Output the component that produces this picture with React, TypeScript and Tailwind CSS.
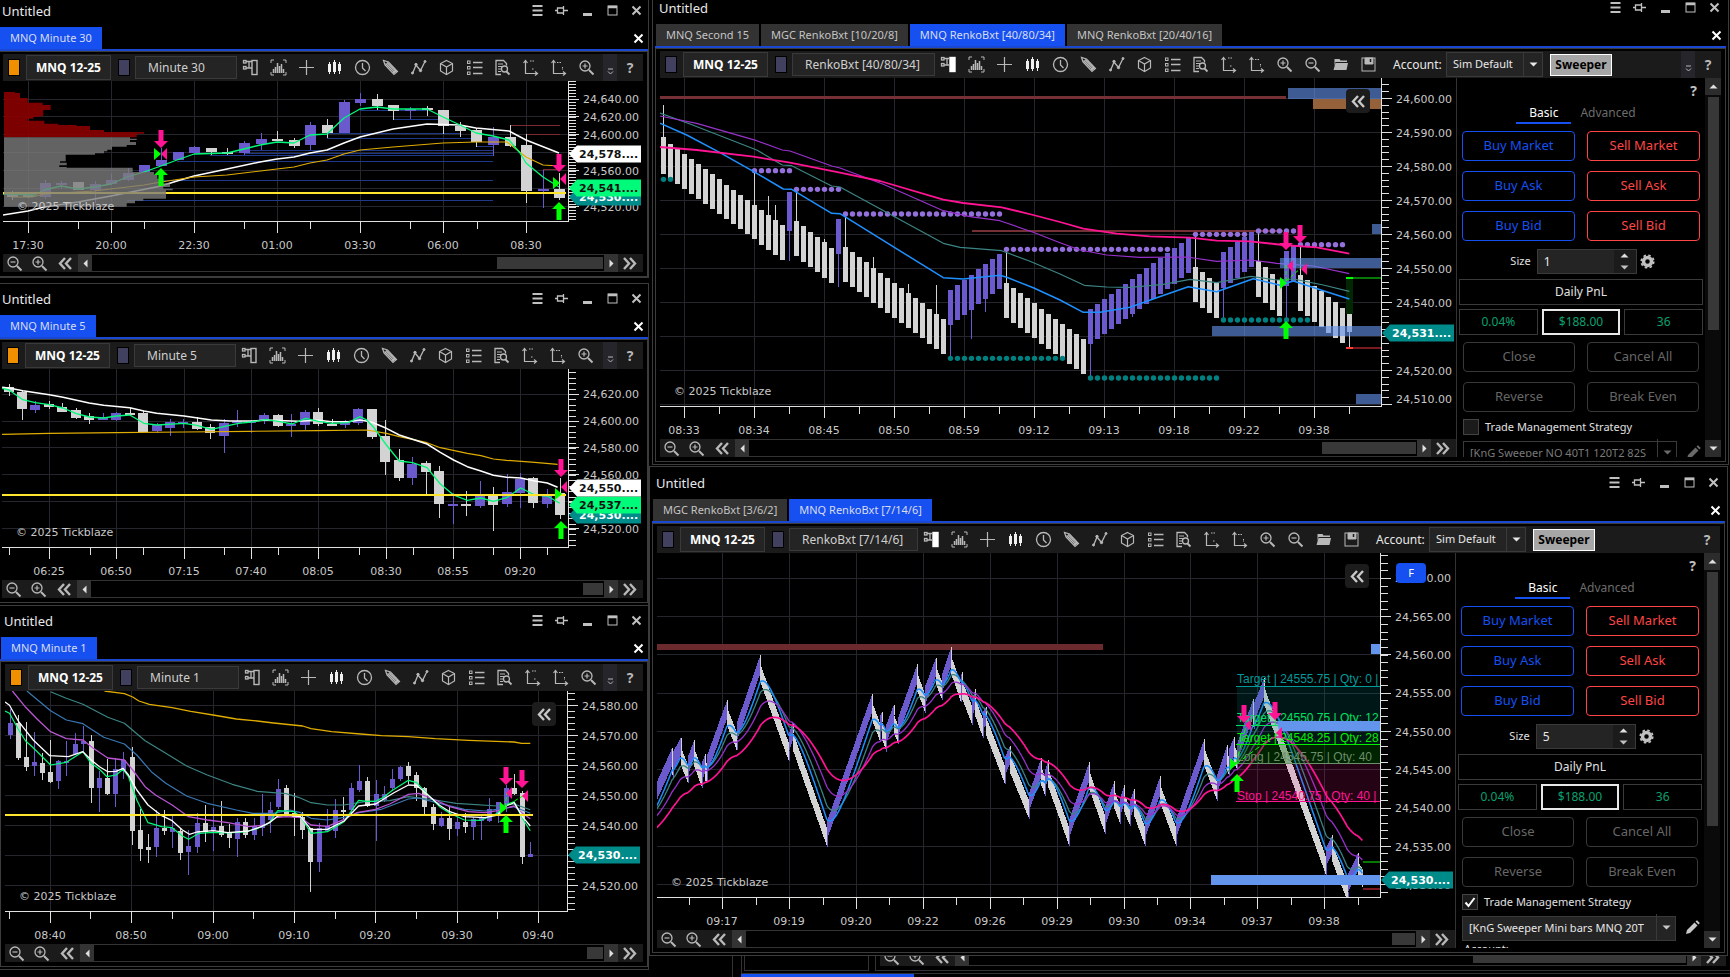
import type { ReactNode } from 'react';
import clsx from 'clsx';

type Point = [number, number];
type Dir = 'u' | 'd';
// direction, high, body top, body bottom, low
type Candle = [Dir, number, number, number, number];
type Space = { ox: number; oy: number; sx: number; sy: number };

const UP = '#6a5acd';
const DOWN = '#d3d3d3';
const MINT = '#00fa7a';
const GOLD = '#e0ac00';
const PINK = '#ff1493';
const LIME = '#00ff00';
const TEAL = '#008b8b';

const PX: Space = { ox: 0, oy: 0, sx: 1, sy: 1 };
const FIVE: Space = { ox: 0, oy: 280, sx: 0.4146, sy: 1 / 3 };
const ONE: Space = { ox: 0, oy: 600, sx: 0.4146, sy: 1 / 3 };
const R40: Space = { ox: 650, oy: 0, sx: 1 / 3, sy: 1 / 3 };
const R7: Space = { ox: 650, oy: 465, sx: 1 / 3, sy: 1 / 3 };

const toPath = (points: Point[], s: Space) =>
  points.map(([x, y]) => `${(s.ox + x * s.sx).toFixed(1)},${(s.oy + y * s.sy).toFixed(1)}`).join(' ');

const range = (from: number, to: number, step = 1) => {
  const out: number[] = [];
  for (let v = from; v <= to + 0.001; v += step) out.push(v);
  return out;
};

/* ---------- icons ---------- */

function Glyph({ name, active }: { name: string; active?: boolean }) {
  const shapes: Record<string, ReactNode> = {
    trader: (
      <>
        <rect x="10" y="1.5" width="5" height="14" fill={active ? '#fff' : 'none'} stroke={active ? '#fff' : 'currentColor'} strokeWidth="1.4" />
        <rect x="1.5" y="1.5" width="2.5" height="2.5" strokeWidth="1.3" />
        <rect x="1.5" y="7.5" width="2.5" height="2.5" strokeWidth="1.3" />
        <path d="M4 2.5h6M4 9h6M7 2.5v6.5" strokeWidth="1.3" />
      </>
    ),
    bars: (
      <>
        <path d="M1 4V1h3M13 1h3v3M16 13v3h-3M4 16H1v-3" />
        <path d="M3.5 14v-4M5.5 14V8M7.5 14V4M9.5 14V7M11.5 14V5M13.5 14v-4" strokeWidth="1.5" />
      </>
    ),
    plus: <path d="M8.5 1v15M1 8.5h15" strokeWidth="1.2" />,
    candles: (
      <g fill="#f0f0f0" stroke="#f0f0f0">
        <path d="M3.5 3v12M8.5 1v14M13.5 3v12" />
        <rect x="2.5" y="5.5" width="2" height="7" />
        <rect x="7.5" y="3.5" width="2" height="9" />
        <rect x="12.5" y="5.5" width="2" height="6" />
      </g>
    ),
    clock: (
      <>
        <circle cx="8.5" cy="8.5" r="7" strokeWidth="1.3" />
        <path d="M8.5 4v5l3 3" strokeWidth="1.3" />
      </>
    ),
    pencil: (
      <>
        <path d="M1.5 1.5l1.5 4.5 9 9.5 3.5-3L6.5 3z" strokeWidth="1.2" />
        <path d="M3.5 4.5l9.5 9.5M5 3.5l9.5 9.5M11 14l3-3" strokeWidth="1.5" />
      </>
    ),
    zigzag: (
      <>
        <path d="M2.5 14.5L6 6l4.5 5.5L15 2.5" strokeWidth="1.3" />
        <circle cx="6" cy="5.5" r="1.2" fill="currentColor" />
        <circle cx="10.5" cy="11.5" r="1.2" fill="currentColor" />
        <circle cx="2.5" cy="14" r="1" fill="currentColor" />
        <circle cx="15" cy="2.5" r="1" fill="currentColor" />
      </>
    ),
    cube: (
      <>
        <path d="M8.5 1.5l6 3V12l-6 3.500-6-3.500V4.500z" strokeWidth="1.2" />
        <path d="M2.5 4.5l6 3.500 6-3.500M8.5 8v7.500" strokeWidth="1.2" />
      </>
    ),
    list: (
      <>
        <rect x="1.5" y="2" width="2.5" height="2.5" />
        <rect x="1.5" y="7.5" width="2.5" height="2.5" />
        <rect x="1.5" y="13" width="2.5" height="2.5" />
        <path d="M7 3.5h9.5M7 8.5h9.5M7 14.5h9.5" strokeWidth="1.3" />
      </>
    ),
    report: (
      <>
        <path d="M7 15.5H2v-14h7.5l3 3v2" strokeWidth="1.3" />
        <path d="M4 5h5M4 7.5h4M4 10h3M4 12.5h3" />
        <circle cx="10.5" cy="10" r="3" strokeWidth="1.3" />
        <path d="M12.5 12.5l3 3" strokeWidth="1.8" />
      </>
    ),
    axisA: (
      <>
        <path d="M3.5 2v12.5H15M1.5 4l2-2.5 2 2.5M13 12.500l2.500 2-2.500 2" strokeWidth="1.2" />
        <path d="M8 2h4M10 10h2" strokeDasharray="1.5 1" />
      </>
    ),
    axisB: (
      <>
        <path d="M3.5 2v12.5H15M1.5 4l2-2.5 2 2.5M13 12.500l2.500 2-2.500 2" strokeWidth="1.2" />
        <path d="M7 3.5h4M12.5 8v3" strokeDasharray="1.5 1" />
      </>
    ),
    zoomIn: (
      <>
        <circle cx="7" cy="7" r="5" strokeWidth="1.3" />
        <path d="M4.5 7h5M7 4.5v5" strokeWidth="1.2" />
        <path d="M11 11l4.5 4.5" strokeWidth="2" />
      </>
    ),
    zoomOut: (
      <>
        <circle cx="7" cy="7" r="5" strokeWidth="1.3" />
        <path d="M4.5 7h5" strokeWidth="1.2" />
        <path d="M11 11l4.5 4.5" strokeWidth="2" />
      </>
    ),
    folder: (
      <g fill="#b8b8b8" stroke="none">
        <path d="M2.5 3h5l1 1.500h6.500V6H3.500l-1 4z" />
        <path d="M3.5 7H16l-1.500 7h-13z" />
      </g>
    ),
    save: (
      <>
        <rect x="2" y="2" width="13" height="13" />
        <path d="M5 2h8v6H5z" fill="#b8b8b8" />
        <path d="M10.5 3v3" stroke="#1b1b1b" strokeWidth="1.5" />
      </>
    ),
    menu: <path d="M3.5 4h10M3.5 8.5h10M3.5 13h10" strokeWidth="2" />,
    pin: <path d="M3.500 6h6v5h-6zM9.500 4v9M10 8.500h4M1 8.500h2" strokeWidth="1.3" />,
    minimize: <path d="M4 12.5h9" strokeWidth="3" />,
    maximize: (
      <>
        <rect x="4" y="4" width="9" height="9" />
        <path d="M4 5h9" strokeWidth="2.5" />
      </>
    ),
    close: <path d="M4.5 4.5l8 8M12.5 4.5l-8 8" strokeWidth="2" />,
    back: <path d="M8 3L3 8.5 8 14M14 3L9 8.500 14 14" strokeWidth="2.4" />,
    forward: <path d="M3 3l5 5.500L3 14M9 3l5 5.500L9 14" strokeWidth="2.4" />,
    left: <path d="M10.500 4.500v8l-4-4z" fill="#e0e0e0" stroke="none" />,
    right: <path d="M6.500 4.500v8l4-4z" fill="#e0e0e0" stroke="none" />,
    up: <path d="M4.500 10.500h8l-4-4z" fill="#e0e0e0" stroke="none" />,
    down: <path d="M4.500 6.500h8l-4 4z" fill="currentColor" stroke="none" />,
    more: <path d="M6 10h5M6 12.500l2.500 2.500 2.500-2.500" />,
    gear: (
      <>
        <circle cx="8.5" cy="8.5" r="4" strokeWidth="3.5" />
        <circle cx="8.5" cy="8.5" r="6.3" strokeWidth="1.6" strokeDasharray="2.6 2.35" />
      </>
    ),
    edit: <path d="M2 15l1-4 7.500-7.500 3 3L6 14zM11.500 2.500l1.500-1.200 2.800 2.800-1.300 1.400z" fill="currentColor" stroke="none" />,
  };
  return (
    <svg viewBox="0 0 17 17" className="h-[17px] w-[17px] shrink-0" fill="none" stroke="currentColor" aria-hidden="true">
      {shapes[name]}
    </svg>
  );
}

/* ---------- chart parts ---------- */

function Line({ points, color, s = PX, width = 1 }: { points: Point[]; color: string; s?: Space; width?: number }) {
  return <polyline points={toPath(points, s)} fill="none" stroke={color} strokeWidth={width} strokeLinejoin="round" />;
}

function Candles({ data, x0, step, width, s = PX }: { data: Candle[]; x0: number; step: number; width: number; s?: Space }) {
  return (
    <g shapeRendering="crispEdges">
      {data.map(([dir, high, top, bottom, low], i) => {
        const x = Math.round(x0 + i * step);
        const y = (v: number) => s.oy + v * s.sy;
        const color = dir === 'u' ? UP : DOWN;
        return (
          <g key={i} fill={color}>
            <rect x={x} y={y(high)} width="1" height={y(low) - y(high)} />
            <rect x={x - Math.floor(width / 2)} y={y(top)} width={width} height={Math.max(2, y(bottom) - y(top))} />
          </g>
        );
      })}
    </g>
  );
}

function ArrowDown({ x, y }: { x: number; y: number }) {
  return <path d={`M${x} ${y}l-7-7h4.500v-11h5v11H${x + 7}z`} fill={PINK} />;
}

function ArrowUp({ x, y }: { x: number; y: number }) {
  return <path d={`M${x} ${y}l-7 7h4.500v11h5v-11H${x + 7}z`} fill={LIME} />;
}

function Exit({ x, y }: { x: number; y: number }) {
  return <path d={`M${x} ${y}l6-6v12z`} fill={PINK} />;
}

function Entry({ x, y }: { x: number; y: number }) {
  return <path d={`M${x} ${y}l-7-6v12z`} fill={LIME} />;
}

function Tag({ x, y, label, fill, color }: { x: number; y: number; label: string; fill: string; color: string }) {
  return (
    <g>
      <path d={`M${x} ${y}l8-8.500h64v17h-64z`} fill={fill} />
      <text x={x + 10} y={y + 4} fill={color} className="font-['DejaVu_Sans'] text-[11px] font-bold">
        {label}
      </text>
    </g>
  );
}

type ChartProps = {
  id: string;
  box: [number, number, number, number];
  axis: Point;
  times: [number, string][];
  minorTimes: number[];
  grid: number[];
  prices: [number, string][];
  tick: number;
  mark: Point;
  tags: ReactNode;
  children: ReactNode;
  className: string;
};

function Chart({ id, box, axis, times, minorTimes, grid, prices, tick, mark, tags, children, className }: ChartProps) {
  const [bx, by, bw, bh] = box;
  const [ax, ay] = axis;
  const first = grid[0];
  const up = range(1, Math.floor((first - by) / tick)).map((n) => first - n * tick);
  const down = range(0, Math.floor((ay - first) / tick)).map((n) => first + n * tick);
  return (
    <svg viewBox={`${bx} ${by} ${bw} ${bh}`} preserveAspectRatio="xMaxYMin slice" className={clsx('block w-full', className)} role="img" aria-label={id}>
      <clipPath id={id}>
        <rect x={bx} y={by} width={ax - bx} height={ay - by} />
      </clipPath>
      <g clipPath={`url(#${id})`}>
        <g shapeRendering="crispEdges" fill="#25252e">
          {grid.map((y) => (
            <rect key={y} x={bx} y={Math.round(y)} width={ax - bx} height="1" />
          ))}
          {times.map(([x]) => (
            <rect key={x} x={Math.round(x)} y={by} width="1" height={ay - by} />
          ))}
        </g>
        {children}
        <text x={mark[0]} y={mark[1]} fill="#c8c8c8" className="font-['DejaVu_Sans'] text-[11px]">
          © 2025 Tickblaze
        </text>
      </g>
      <g shapeRendering="crispEdges" fill="#e0e0e0">
        <rect x={bx} y={ay} width={ax - bx + 1} height="1" />
        <rect x={ax} y={by} width="1" height={ay - by} />
        {times.map(([x]) => (
          <rect key={x} x={Math.round(x)} y={ay} width="1" height="12" />
        ))}
        {minorTimes.map((x) => (
          <rect key={x} x={Math.round(x)} y={ay} width="1" height="8" />
        ))}
        {[...up, ...down].map((y) => (
          <rect key={y} x={ax} y={Math.round(y)} width="8" height="1" />
        ))}
        {grid.map((y) => (
          <rect key={y} x={ax} y={Math.round(y)} width="11" height="1" />
        ))}
      </g>
      <g fill="#c8c8c8" className="font-['DejaVu_Sans'] text-[11px]">
        {prices.map(([y, label]) => (
          <text key={label} x={ax + 15} y={y + 4}>
            {label}
          </text>
        ))}
        {times.map(([x, label]) => (
          <text key={label} x={x} y={ay + 28} textAnchor="middle">
            {label}
          </text>
        ))}
      </g>
      {tags}
    </svg>
  );
}

/* ---------- Minute 30 ---------- */

const m30: Candle[] = [
  ['d', 191, 194, 197, 200], ['d', 193, 195, 197, 198], ['u', 180, 183, 197, 199], ['u', 181, 183, 185, 189],
  ['d', 182, 182, 190, 190], ['u', 181, 184, 190, 203], ['u', 174, 180, 184, 185], ['u', 168, 173, 180, 181],
  ['u', 165, 165, 172, 172], ['u', 148, 160, 166, 166], ['u', 152, 152, 160, 160], ['u', 146, 147, 153, 153],
  ['d', 148, 148, 152, 155], ['d', 148, 152, 153, 155], ['u', 141, 143, 153, 155], ['u', 133, 139, 144, 150],
  ['d', 131, 139, 141, 141], ['d', 138, 140, 146, 148], ['u', 122, 125, 145, 150], ['d', 119, 125, 133, 138],
  ['u', 100, 102, 133, 133], ['u', 93, 99, 103, 106], ['d', 94, 99, 106, 110], ['d', 105, 105, 111, 120],
  ['u', 107, 109, 111, 119], ['d', 106, 108, 110, 116], ['d', 110, 110, 126, 134], ['d', 122, 126, 131, 137],
  ['d', 128, 130, 142, 147], ['u', 127, 137, 145, 156], ['d', 125, 137, 146, 147], ['d', 134, 145, 191, 203],
  ['u', 170, 189, 191, 208], ['d', 173, 189, 198, 200],
];

const m30Profile: Space = { ox: 0, oy: 50, sx: 1 / 3, sy: 1 / 3 };
const m30Red: Point[] = [
  [12, 126], [45, 126], [45, 129], [60, 129], [60, 144], [83, 144], [83, 158], [128, 158], [128, 165], [152, 165], [152, 180],
  [130, 180], [130, 198], [100, 202], [100, 206], [83, 206], [83, 212], [133, 212], [133, 221], [175, 221], [175, 225], [230, 225],
  [230, 228], [270, 228], [270, 240], [312, 240], [312, 246], [432, 246], [432, 251], [410, 251], [410, 262], [12, 262],
];
const m30Gray: Point[] = [
  [12, 262], [390, 262], [390, 266], [410, 266], [410, 270], [390, 270], [390, 276], [408, 276], [408, 285], [380, 285], [380, 290],
  [336, 290], [336, 299], [322, 299], [322, 304], [312, 304], [312, 310], [285, 310], [285, 314], [197, 314], [197, 334], [180, 334],
  [180, 338], [200, 338], [200, 346], [178, 346], [178, 351], [200, 351], [200, 353], [398, 353], [398, 366], [462, 366], [462, 375],
  [472, 375], [472, 386], [490, 386], [490, 400], [510, 400], [510, 411], [490, 411], [490, 416], [518, 416], [518, 421], [498, 421],
  [498, 446], [430, 446], [430, 452], [405, 452], [405, 460], [380, 460], [380, 470], [12, 470],
];
// y, from, to
const m30Levels: [number, number, number][] = [
  [110, 360, 427], [119, 393, 443], [133, 327, 460], [138, 327, 480], [146, 476, 493], [150, 244, 493], [153, 244, 493],
  [155, 210, 493], [161, 177, 493], [180, 161, 493], [200, 127, 493],
];

function Minute30Chart() {
  return (
    <Chart
      id="minute-30"
      className="h-[173px]"
      box={[3, 81, 640, 173]}
      axis={[568, 221]}
      times={[[28, '17:30'], [111, '20:00'], [194, '22:30'], [277, '01:00'], [360, '03:30'], [443, '06:00'], [526, '08:30']]}
      minorTimes={[78, 144, 244, 310, 410, 477]}
      grid={[99, 116, 134, 152, 170, 188, 206]}
      prices={[[99, '24,640.00'], [117, '24,620.00'], [135, '24,600.00'], [171, '24,560.00'], [207, '24,520.00']]}
      tick={3}
      mark={[17, 210]}
      tags={
        <>
          <Tag x={569} y={197} label="24,530...." fill={TEAL} color="#fff" />
          <Tag x={569} y={188} label="24,541...." fill={MINT} color="#111" />
          <Tag x={569} y={154} label="24,578...." fill="#fff" color="#111" />
          <ArrowDown x={559} y={172} />
          <ArrowUp x={559} y={202} />
        </>
      }
    >
      <g shapeRendering="crispEdges">
        {m30Levels.map(([y, a, b]) => (
          <rect key={y} x={a} y={y} width={b - a} height="1" fill="#1f3888" />
        ))}
        <rect x="510" y="125" width="50" height="1" fill="#7a2a30" />
        <rect x="526" y="134" width="34" height="1" fill="#7a2a30" />
        <rect x="543" y="169" width="17" height="1" fill="#7a2a30" />
      </g>
      <Candles data={m30} x0={11.5} step={16.6} width={11} />
      <Line color="#ffffff" width={1.5} points={[[3, 215], [28, 211], [44, 207], [78, 202], [111, 196], [161, 186], [177, 181], [194, 176], [227, 169], [260, 162], [277, 159], [294, 157], [310, 153], [327, 150], [344, 143], [360, 137], [393, 129], [427, 124], [460, 125], [476, 128], [509, 131], [526, 140], [559, 153]]} />
      <Line color={GOLD} width={1.2} points={[[11, 197], [32, 197], [44, 194], [94, 191], [144, 185], [161, 182], [194, 177], [227, 175], [277, 169], [294, 167], [310, 163], [327, 160], [344, 154], [360, 150], [393, 147], [443, 143], [476, 142], [507, 142], [526, 157], [543, 165], [559, 166]]} />
      <Line color={MINT} width={1.3} points={[[3, 194], [35, 195], [44, 190], [61, 186], [78, 189], [94, 187], [111, 184], [127, 177], [144, 172], [161, 166], [177, 160], [194, 154], [227, 153], [244, 149], [260, 145], [277, 142], [294, 143], [310, 135], [327, 134], [344, 118], [360, 109], [377, 107], [393, 109], [427, 109], [443, 117], [460, 125], [476, 133], [493, 136], [509, 140], [520, 153], [526, 163], [543, 177], [559, 187]]} />
      <rect x="3" y="192" width="563" height="2" fill="#ffe52e" />
      <polygon points={toPath(m30Red, m30Profile)} fill="#8b0000" fillOpacity="0.9" />
      <polygon points={toPath(m30Gray, m30Profile)} fill="#7c7c7c" fillOpacity="0.8" />
      <ArrowDown x={161} y={148} />
      <Entry x={161} y={154} />
      <Exit x={161} y={154} />
      <ArrowUp x={161} y={168} />
      <Entry x={560} y={183} />
      <Exit x={560} y={179} />
    </Chart>
  );
}

/* ---------- Minute 5 ---------- */

const m5: Candle[] = [
  ['d', 312, 320, 335, 348], ['d', 330, 336, 387, 420], ['u', 362, 375, 390, 399], ['d', 363, 371, 381, 388],
  ['d', 368, 381, 395, 396], ['d', 385, 389, 414, 416], ['d', 400, 408, 420, 432], ['u', 400, 411, 419, 420],
  ['u', 396, 399, 420, 424], ['d', 385, 398, 402, 404], ['d', 393, 399, 456, 456], ['u', 430, 436, 454, 458],
  ['u', 417, 426, 444, 468], ['u', 418, 425, 432, 445], ['d', 412, 426, 447, 450], ['d', 432, 441, 459, 477],
  ['u', 418, 429, 468, 519], ['u', 390, 422, 430, 440], ['u', 420, 424, 427, 460], ['u', 400, 405, 420, 432],
  ['d', 403, 405, 438, 440], ['u', 403, 431, 438, 471], ['u', 390, 396, 435, 450], ['d', 384, 396, 432, 438],
  ['d', 418, 431, 438, 438], ['u', 420, 426, 435, 444], ['u', 384, 387, 430, 435], ['d', 387, 387, 471, 477],
  ['d', 420, 468, 546, 585], ['d', 507, 540, 594, 603], ['u', 530, 551, 594, 615], ['d', 543, 549, 576, 642],
  ['d', 558, 573, 672, 714], ['u', 640, 671, 675, 732], ['d', 633, 672, 678, 709], ['u', 603, 649, 678, 685],
  ['d', 621, 648, 675, 753], ['u', 582, 636, 672, 681], ['u', 578, 597, 640, 684], ['d', 591, 594, 669, 684],
  ['u', 627, 645, 672, 684], ['d', 594, 640, 705, 717],
];

function Minute5Chart() {
  return (
    <Chart
      id="minute-5"
      className="h-[211px]"
      box={[2, 369, 641, 211]}
      axis={[568, 547]}
      times={[[49, '06:25'], [116, '06:50'], [184, '07:15'], [251, '07:40'], [318, '08:05'], [386, '08:30'], [453, '08:55'], [520, '09:20']]}
      minorTimes={[9, 90, 143, 224, 278, 359, 413, 493, 547]}
      grid={[394, 421, 447, 474, 501, 528]}
      prices={[[394, '24,620.00'], [421, '24,600.00'], [448, '24,580.00'], [475, '24,560.00'], [529, '24,520.00']]}
      tick={5.4}
      mark={[16, 536]}
      tags={
        <>
          <Tag x={569} y={515} label="24,530...." fill={TEAL} color="#fff" />
          <Tag x={569} y={505} label="24,537...." fill={MINT} color="#111" />
          <Tag x={569} y={488} label="24,550...." fill="#fff" color="#111" />
        </>
      }
    >
      <Candles data={m5} x0={8.5} step={13.46} width={10} s={FIVE} />
      <Line s={FIVE} color={GOLD} width={1.2} points={[[5, 463], [119, 460], [281, 458], [444, 456], [600, 454], [768, 452], [885, 450], [932, 460], [963, 470], [995, 478], [1030, 488], [1062, 503], [1127, 520], [1160, 527], [1190, 537], [1222, 541], [1290, 547], [1345, 553]]} />
      <Line s={FIVE} color="#ffffff" width={1.5} points={[[5, 322], [22, 324], [55, 332], [119, 344], [152, 352], [215, 369], [250, 376], [313, 383], [347, 393], [378, 400], [444, 408], [510, 420], [555, 423], [610, 423], [640, 420], [720, 424], [768, 421], [800, 425], [840, 425], [868, 420], [880, 422], [897, 427], [932, 445], [963, 465], [995, 478], [1030, 492], [1062, 517], [1094, 540], [1127, 560], [1160, 573], [1190, 586], [1222, 592], [1256, 594], [1290, 603], [1320, 609], [1345, 622]]} />
      <Line s={FIVE} color={MINT} width={1.3} points={[[5, 325], [22, 330], [55, 359], [85, 368], [119, 374], [152, 384], [184, 401], [216, 411], [250, 414], [281, 408], [313, 405], [347, 430], [378, 435], [444, 430], [475, 436], [510, 448], [542, 439], [575, 430], [606, 426], [640, 419], [672, 424], [705, 432], [737, 415], [768, 424], [800, 430], [840, 428], [868, 410], [885, 420], [900, 440], [932, 495], [963, 543], [995, 548], [1030, 563], [1062, 612], [1094, 645], [1127, 661], [1160, 654], [1190, 664], [1222, 653], [1256, 624], [1290, 645], [1320, 648], [1350, 670]]} />
      <rect x="2" y="494" width="564" height="2" fill="#ffe52e" />
      <ArrowDown x={561} y={477} />
      <Exit x={561} y={487} />
      <Entry x={562} y={494} />
      <ArrowUp x={561} y={521} />
    </Chart>
  );
}

/* ---------- Minute 1 ---------- */

const m1: Candle[] = [
  ['u', 327, 369, 405, 417], ['d', 345, 369, 473, 480], ['d', 366, 471, 501, 512], ['u', 396, 486, 498, 527],
  ['d', 460, 489, 518, 540], ['d', 420, 516, 546, 549], ['u', 480, 483, 543, 567], ['u', 423, 484, 488, 527],
  ['u', 399, 432, 462, 465], ['u', 378, 424, 432, 456], ['d', 405, 423, 564, 609], ['u', 512, 534, 564, 636],
  ['d', 477, 534, 582, 584], ['u', 474, 507, 582, 621], ['u', 456, 480, 510, 538], ['d', 442, 471, 693, 735],
  ['d', 627, 690, 747, 783], ['d', 702, 741, 750, 789], ['u', 630, 684, 741, 771], ['d', 631, 684, 692, 705],
  ['u', 648, 683, 696, 744], ['d', 684, 693, 759, 780], ['u', 690, 738, 756, 825], ['u', 640, 669, 741, 759],
  ['d', 615, 669, 696, 726], ['u', 624, 681, 693, 753], ['d', 603, 678, 705, 711], ['d', 672, 696, 714, 744],
  ['u', 654, 666, 717, 771], ['d', 654, 666, 705, 714], ['u', 655, 678, 705, 720], ['u', 583, 640, 683, 708],
  ['u', 606, 630, 660, 699], ['u', 537, 567, 621, 627], ['d', 555, 564, 642, 645], ['d', 578, 640, 650, 708],
  ['d', 636, 650, 690, 717], ['d', 684, 684, 786, 876], ['u', 670, 684, 786, 816], ['u', 627, 679, 693, 696],
  ['u', 597, 630, 693, 714], ['d', 590, 629, 633, 660], ['u', 549, 564, 630, 642], ['u', 495, 542, 570, 576],
  ['d', 531, 543, 618, 621], ['u', 540, 582, 618, 723], ['u', 558, 582, 600, 606], ['u', 507, 537, 564, 573],
  ['u', 498, 500, 537, 543], ['d', 486, 498, 528, 552], ['d', 516, 525, 564, 603], ['d', 561, 564, 621, 645],
  ['d', 612, 621, 672, 690], ['u', 636, 654, 678, 681], ['d', 621, 654, 687, 720], ['u', 650, 665, 687, 708],
  ['d', 640, 666, 681, 699], ['u', 650, 657, 681, 720], ['u', 648, 655, 664, 720], ['u', 594, 627, 663, 666],
  ['u', 606, 606, 645, 669], ['u', 555, 564, 615, 636], ['d', 521, 564, 582, 586], ['d', 573, 579, 771, 792],
  ['u', 726, 762, 771, 771],
];

function Minute1Chart() {
  return (
    <Chart
      id="minute-1"
      className="h-[253px]"
      box={[5, 691, 638, 253]}
      axis={[567, 911]}
      times={[[50, '08:40'], [131, '08:50'], [213, '09:00'], [294, '09:10'], [375, '09:20'], [457, '09:30'], [538, '09:40']]}
      minorTimes={[9, 90, 172, 253, 335, 416, 497]}
      grid={[705, 735, 765, 795, 825, 855, 885]}
      prices={[[706, '24,580.00'], [736, '24,570.00'], [766, '24,560.00'], [796, '24,550.00'], [826, '24,540.00'], [886, '24,520.00']]}
      tick={6}
      mark={[19, 900]}
      tags={<Tag x={568} y={855} label="24,530...." fill={TEAL} color="#fff" />}
    >
      <Candles data={m1} x0={9.5} step={8.135} width={5} s={ONE} />
      <Line s={ONE} color={GOLD} width={1.3} points={[[252, 273], [300, 281], [320, 291], [335, 303], [360, 313], [415, 323], [460, 334], [514, 345], [570, 357], [620, 363], [660, 369], [730, 378], [750, 386], [800, 395], [870, 402], [920, 407], [985, 410], [1050, 416], [1130, 421], [1240, 426], [1258, 430], [1279, 430]]} />
      <Line s={ONE} color="#3d8585" width={1.2} points={[[122, 275], [160, 295], [200, 313], [260, 352], [300, 370], [350, 422], [400, 460], [450, 498], [500, 525], [560, 553], [620, 574], [690, 581], [720, 592], [750, 608], [790, 615], [830, 615], [880, 605], [940, 602], [985, 590], [1050, 600], [1100, 610], [1200, 618], [1240, 612], [1279, 629]]} />
      <Line s={ONE} color="#3a78b5" width={1.2} points={[[65, 273], [122, 332], [160, 360], [200, 371], [250, 412], [300, 432], [330, 465], [365, 515], [400, 550], [450, 588], [500, 610], [570, 630], [610, 640], [660, 640], [700, 630], [725, 638], [750, 655], [790, 660], [830, 652], [870, 637], [920, 628], [985, 597], [1010, 594], [1060, 610], [1120, 628], [1170, 633], [1240, 620], [1279, 640]]} />
      <Line s={ONE} color="#ba55d3" width={1.3} points={[[30, 273], [62, 322], [90, 358], [122, 395], [160, 416], [200, 420], [225, 445], [260, 474], [300, 480], [320, 510], [350, 560], [375, 585], [415, 615], [455, 650], [500, 660], [550, 668], [600, 680], [640, 675], [665, 653], [690, 650], [725, 653], [750, 675], [790, 679], [830, 658], [860, 638], [906, 628], [940, 612], [985, 583], [1010, 580], [1050, 600], [1085, 620], [1130, 635], [1170, 638], [1200, 632], [1240, 618], [1260, 640], [1279, 656]]} />
      <Line s={ONE} color={MINT} width={1.2} points={[[12, 333], [23, 340], [45, 390], [62, 423], [80, 443], [122, 495], [160, 487], [200, 455], [220, 490], [240, 508], [258, 530], [280, 525], [297, 508], [310, 530], [330, 600], [357, 668], [390, 680], [415, 683], [440, 708], [455, 718], [480, 700], [514, 697], [550, 699], [590, 696], [620, 686], [650, 668], [670, 632], [690, 633], [710, 635], [728, 655], [750, 700], [790, 695], [830, 665], [865, 601], [885, 604], [906, 604], [925, 592], [945, 572], [985, 541], [1005, 548], [1025, 575], [1060, 620], [1085, 640], [1120, 660], [1160, 661], [1200, 640], [1225, 612], [1240, 605], [1260, 655], [1279, 692]]} />
      <Line s={ONE} color="#ffffff" width={1.3} points={[[12, 306], [23, 316], [45, 365], [80, 420], [120, 467], [165, 470], [200, 455], [220, 480], [240, 500], [260, 515], [280, 514], [297, 505], [310, 525], [330, 570], [357, 615], [390, 647], [415, 662], [440, 690], [457, 703], [475, 696], [514, 692], [550, 698], [600, 693], [630, 680], [650, 668], [670, 648], [690, 645], [725, 650], [750, 688], [790, 688], [830, 663], [865, 618], [906, 612], [950, 578], [985, 555], [1005, 556], [1030, 583], [1060, 616], [1085, 635], [1120, 650], [1170, 653], [1200, 645], [1220, 618], [1240, 608], [1260, 650], [1279, 678]]} />
      <rect x="5" y="814" width="528" height="2" fill="#ffe52e" />
      <path d="M504 807L523 796M505 807L507 792" stroke={LIME} strokeDasharray="4 2" />
      <ArrowDown x={506} y={785} />
      <ArrowDown x={522} y={788} />
      <Exit x={506} y={793} />
      <Exit x={522} y={796} />
      <Entry x={507} y={808} />
      <ArrowUp x={506} y={815} />
    </Chart>
  );
}

/* ---------- RenkoBxt 40/80/34 ---------- */

// first bar, count, direction, first top, step, height
const bricks: [number, number, Dir, number, number, number][] = [
  [0, 1, 'd', 411, 0, 111], [1, 17, 'd', 432, 15.2, 104], [18, 1, 'u', 576, 0, 117], [19, 6, 'd', 663, 16, 106],
  [25, 1, 'u', 657, 0, 105], [26, 15, 'd', 741, 15.4, 105], [41, 8, 'u', 870, -15.4, 105], [49, 12, 'd', 849, 15.3, 105],
  [61, 15, 'u', 927, -15.2, 106], [76, 4, 'd', 801, 16, 106], [80, 5, 'u', 756, -15.2, 107], [85, 4, 'd', 783, 19, 108],
  [89, 2, 'u', 752, -14, 106], [91, 7, 'd', 825, 16.4, 107], [98, 1, 'd', 942, 0, 54],
];
// bar, direction, from, to
const brickWicks: [number, Dir, number, number][] = [
  [0, 'd', 315, 420], [13, 'd', 510, 640], [15, 'd', 588, 650], [16, 'd', 615, 670], [18, 'u', 690, 783], [19, 'd', 570, 680],
  [23, 'd', 717, 740], [25, 'u', 760, 861], [26, 'd', 645, 750], [30, 'd', 771, 810], [35, 'd', 852, 890], [39, 'd', 855, 950],
  [41, 'u', 970, 1070], [44, 'u', 900, 1017], [46, 'u', 880, 936], [49, 'd', 750, 850], [61, 'u', 1030, 1130], [67, 'u', 930, 950],
  [76, 'd', 708, 810], [80, 'u', 860, 955], [85, 'd', 693, 790], [89, 'u', 850, 960], [91, 'd', 740, 830], [98, 'd', 990, 1040],
];
// from bar, to bar, y
const swingHighs: [number, number, number][] = [[13, 18, 512], [19, 25, 568], [26, 48, 642], [49, 72, 748], [76, 83, 703], [85, 90, 693], [91, 97, 734]];
const swingLows: [number, number, number][] = [[0, 1, 538], [41, 57, 1075], [61, 79, 1134], [80, 92, 960]];

function Dots({ rows, color }: { rows: [number, number, number][]; color: string }) {
  return (
    <g fill={color}>
      {rows.flatMap(([a, b, y]) => range(a, b).map((i) => <circle key={`${i}-${y}`} cx={663.5 + i * 7} cy={y / 3} r="2.7" />))}
    </g>
  );
}

function Renko40Chart() {
  return (
    <Chart
      id="renko-40"
      className="h-[361px]"
      box={[660, 78, 796, 361]}
      axis={[1381, 406]}
      times={[[684, '08:33'], [754, '08:34'], [824, '08:45'], [894, '08:50'], [964, '08:59'], [1034, '09:12'], [1104, '09:13'], [1174, '09:18'], [1244, '09:22'], [1314, '09:38']]}
      minorTimes={range(719, 1349, 70)}
      grid={[98, 132, 166, 200, 234, 268, 302, 336, 370, 404]}
      prices={[[99, '24,600.00'], [133, '24,590.00'], [167, '24,580.00'], [201, '24,570.00'], [235, '24,560.00'], [269, '24,550.00'], [303, '24,540.00'], [371, '24,520.00'], [399, '24,510.00']]}
      tick={6.8}
      mark={[674, 395]}
      tags={<Tag x={1382} y={333} label="24,531...." fill={TEAL} color="#fff" />}
    >
      <rect x="660" y="96" width="626" height="3" fill="#753035" />
      <rect x="972" y="230" width="311" height="2" fill="#753035" />
      <g shapeRendering="crispEdges">
        <rect x="1346" y="278" width="7" height="36" fill="#032603" />
        {brickWicks.map(([i, dir, a, b]) => (
          <rect key={i} x={663 + i * 7} y={a / 3} width="1" height={(b - a) / 3} fill={dir === 'u' ? UP : DOWN} />
        ))}
        {bricks.flatMap(([start, count, dir, top, step, height]) =>
          range(0, count - 1).map((n) => (
            <rect key={start + n} x={661 + (start + n) * 7} y={(top + n * step) / 3} width="5" height={height / 3} fill={dir === 'u' ? UP : DOWN} />
          )),
        )}
      </g>
      <Dots rows={swingHighs} color="#9370db" />
      <Dots rows={swingLows} color="#008080" />
      <Line s={R40} color="#3d8585" width={1.2} points={[[30, 339], [120, 372], [320, 450], [397, 495], [425, 497], [545, 558], [570, 561], [880, 730], [930, 742], [1055, 752], [1140, 784], [1230, 822], [1303, 856], [1370, 861], [1440, 862], [1540, 853], [1620, 838], [1700, 848], [1803, 829], [1880, 840], [1930, 837], [2020, 855], [2098, 874]]} />
      <Line s={R40} color="#9932cc" width={1.2} points={[[30, 348], [140, 370], [320, 422], [397, 450], [420, 453], [545, 498], [570, 504], [700, 553], [880, 632], [960, 650], [1050, 662], [1150, 697], [1230, 728], [1290, 750], [1370, 765], [1470, 772], [1610, 771], [1700, 784], [1800, 780], [1880, 790], [1990, 798], [2098, 821]]} />
      <Line s={R40} color="#1e90ff" width={1.5} points={[[30, 370], [110, 405], [210, 458], [310, 514], [400, 567], [425, 568], [545, 640], [570, 641], [880, 833], [940, 837], [1050, 826], [1070, 832], [1150, 863], [1230, 900], [1300, 937], [1350, 937], [1440, 922], [1520, 893], [1615, 860], [1700, 875], [1810, 836], [1890, 856], [1930, 843], [2020, 872], [2098, 897]]} />
      <Line s={R40} color={PINK} width={1.8} points={[[30, 441], [140, 450], [310, 470], [420, 488], [570, 518], [690, 543], [880, 599], [940, 609], [1055, 622], [1150, 645], [1230, 666], [1300, 686], [1400, 701], [1500, 709], [1620, 713], [1700, 722], [1800, 724], [1900, 735], [2000, 742], [2098, 761]]} />
      <g fill="#6495ed" fillOpacity="0.62">
        <rect x="1288" y="88" width="94" height="11" />
        <rect x="1372" y="224" width="10" height="10" />
        <rect x="1280" y="258" width="102" height="10" />
        <rect x="1212" y="326" width="170" height="10" />
        <rect x="1356" y="394" width="26" height="10" />
      </g>
      <rect x="1313" y="99" width="69" height="10" fill="#94613a" />
      <g shapeRendering="crispEdges">
        <rect x="1353" y="277" width="29" height="2" fill="#067806" />
        <rect x="1346" y="277" width="7" height="2" fill={LIME} />
        <rect x="1353" y="347" width="29" height="2" fill="#7a1a20" />
        <rect x="1346" y="347" width="7" height="2" fill="#ff3b3b" />
      </g>
      <path d="M1286 281l15-13M1286 281v-18" stroke={LIME} strokeDasharray="4 2" />
      <ArrowDown x={1286} y={250} />
      <ArrowDown x={1300} y={243} />
      <Exit x={1287} y={266} />
      <Exit x={1301} y={269} />
      <Entry x={1287} y={283} />
      <ArrowUp x={1286} y={321} />
    </Chart>
  );
}

/* ---------- RenkoBxt 7/14/6 ---------- */

// swing points, alternating low / high
const swings: Point[] = [
  [12, 1050], [67, 848], [70, 940], [92, 818], [114, 955], [133, 824], [157, 970], [166, 868], [172, 950], [232, 704], [260, 855],
  [331, 571], [416, 887], [428, 773], [532, 1147], [667, 686], [691, 830], [696, 742], [709, 860], [731, 720], [745, 837], [802, 598],
  [826, 743], [858, 578], [877, 705], [904, 547], [933, 712], [937, 622], [967, 780], [976, 673], [1000, 820], [1007, 727],
  [1065, 957], [1080, 842], [1138, 1063], [1174, 880], [1186, 993], [1195, 886], [1258, 1143], [1318, 892], [1366, 1108],
  [1393, 949], [1411, 1078], [1423, 961], [1441, 1084], [1453, 973], [1486, 1144], [1531, 934], [1579, 1144], [1663, 823],
  [1702, 1008], [1732, 840], [1738, 930], [1753, 816], [1762, 915], [1810, 703], [1813, 792], [1843, 640], [2028, 1230],
  [2047, 1110], [2093, 1310], [2125, 1163], [2138, 1268],
];
const BRICK = 54;

const closes: Point[] = [];
swings.slice(1).forEach(([x, y], i) => {
  const [px, py] = swings[i];
  const rising = y < py;
  const from = rising ? py - BRICK : py + BRICK;
  for (let v = px; v < x; v += 2) {
    closes.push([v, from + ((y - from) * (v - px)) / (x - px)]);
  }
});

function ema(length: number, start: number): Point[] {
  let value = start;
  return closes.map(([x, y]): Point => {
    value += ((y - value) * 2) / length;
    return [x, value];
  });
}

// text baseline, line y, label, color
const levels: [number, number, string, string][] = [
  [683, 686, 'Target | 24555.75 | Qty: 0 |', '#009a9a'],
  [722, 725, 'Target | 24550.75 | Qty: 12', '#00e060'],
  [742, 744, 'Target | 24548.25 | Qty: 28', '#00f000'],
  [761, 763, 'Long | 24545.75 | Qty: 40', '#6b8e6b'],
  [800, 801, 'Stop | 24540.75 | Qty: 40 |', '#ff1493'],
];

function Renko7Chart() {
  return (
    <Chart
      id="renko-7"
      className="h-[377px]"
      box={[657, 553, 798, 377]}
      axis={[1380, 897]}
      times={[[722, '09:17'], [789, '09:19'], [856, '09:20'], [923, '09:22'], [990, '09:26'], [1057, '09:29'], [1124, '09:30'], [1190, '09:34'], [1257, '09:37'], [1324, '09:38']]}
      minorTimes={[689, 756, 823, 889, 956, 1023, 1090, 1157, 1224, 1291, 1358]}
      grid={[578, 616, 654, 693, 731, 769, 808, 846, 884]}
      prices={[[578, '24,570.00'], [617, '24,565.00'], [655, '24,560.00'], [693, '24,555.00'], [732, '24,550.00'], [770, '24,545.00'], [808, '24,540.00'], [847, '24,535.00'], [885, '24,530.00']]}
      tick={7.65}
      mark={[671, 886]}
      tags={<Tag x={1381} y={880} label="24,530...." fill={TEAL} color="#fff" />}
    >
      <rect x="657" y="644" width="446" height="6" fill="#6b2b2e" />
      <g shapeRendering="crispEdges">
        {swings.slice(1).map(([x, y], i) => {
          const [px, py] = swings[i];
          const rising = y < py;
          // the turning bar opens away from the extreme and leaves only a wick there
          const shape: Point[] = rising
            ? [[px, py - 26], [px, py - BRICK - 26], [x, y], [x, y + BRICK]]
            : [[px, py + 26], [px, py + BRICK + 26], [x, y], [x, y - BRICK]];
          return (
            <g key={i} fill={rising ? UP : DOWN}>
              <polygon points={toPath(shape, R7)} />
              <rect x={R7.ox + px / 3} y={R7.oy + (rising ? py - 30 : py) / 3} width="1" height="10" />
            </g>
          );
        })}
      </g>
      <Line s={R7} color="#3d8585" width={1.3} points={ema(44, 1045)} />
      <Line s={R7} color="#1e90ff" width={1.5} points={ema(28, 1040)} />
      <Line s={R7} color="#9932cc" width={1.3} points={ema(72, 1063)} />
      <Line s={R7} color={PINK} width={1.7} points={ema(122, 1097)} />
      <rect x="1237" y="686" width="143" height="58" fill="#008080" fillOpacity="0.18" />
      <rect x="1237" y="744" width="143" height="19" fill="#006400" fillOpacity="0.35" />
      <rect x="1237" y="763" width="143" height="38" fill="#ff1493" fillOpacity="0.14" />
      {levels.map(([base, line, label, color]) => (
        <g key={label}>
          <rect x="1236" y={line} width="144" height="1" fill={color} />
          <text x="1237" y={base} fill={color} className="font-['Liberation_Sans'] text-[12px]">
            {label}
          </text>
        </g>
      ))}
      <g fill="#6495ed">
        <path d="M1277 721h103v10h-101z" />
        <rect x="1211" y="875" width="169" height="10" />
        <rect x="1371" y="644" width="9" height="10" />
      </g>
      <rect x="1363" y="861" width="17" height="2" fill="#067806" />
      <rect x="1363" y="888" width="17" height="2" fill="#7a1a20" />
      <path d="M1236 764l42-31M1236 764l10-38" stroke={LIME} strokeDasharray="5 3" />
      <ArrowDown x={1244} y={723} />
      <ArrowDown x={1275} y={720} />
      <Exit x={1245} y={725} />
      <Exit x={1276} y={733} />
      <Entry x={1237} y={764} />
      <ArrowUp x={1237} y={774} />
    </Chart>
  );
}

/* ---------- window chrome ---------- */

function IconButton({ name, label, className, active }: { name: string; label: string; className?: string; active?: boolean }) {
  return (
    <button type="button" aria-label={label} className={clsx('flex shrink-0 items-center justify-center', className)}>
      <Glyph name={name} active={active} />
    </button>
  );
}

const tools: [string, string][] = [
  ['trader', 'Chart trader'], ['bars', 'Data box'], ['plus', 'Crosshair'], ['candles', 'Chart style'], ['clock', 'Sessions'],
  ['pencil', 'Drawing tools'], ['zigzag', 'Indicators'], ['cube', 'Strategies'], ['list', 'Objects'], ['report', 'Report'],
  ['axisA', 'Scale'], ['axisB', 'Auto scale'], ['zoomIn', 'Zoom in'],
];
const wideTools: [string, string][] = [...tools, ['zoomOut', 'Zoom out'], ['folder', 'Open template'], ['save', 'Save template']];

type ToolbarProps = { interval: string; intervalWidth: string; linked?: boolean; wide?: boolean; more?: boolean };

function Toolbar({ interval, intervalWidth, linked, wide, more }: ToolbarProps) {
  return (
    <div className="flex h-[27px] items-center overflow-hidden bg-[#1b1b1b] pl-[5px] text-[#b8b8b8]">
      <button type="button" aria-label="Symbol link" className={clsx('h-[17px] w-3 shrink-0 border border-black', linked ? 'bg-[#f09000]' : 'bg-[#41415f]')} />
      <input aria-label="Symbol" defaultValue="MNQ 12-25" className="ml-1.5 h-[25px] w-[85px] shrink-0 border border-[#3a3a3a] bg-[#242424] text-center text-xs font-bold text-white" />
      <button type="button" aria-label="Interval link" className="ml-[7px] h-[17px] w-3 shrink-0 border border-black bg-[#41415f]" />
      <input aria-label="Interval" defaultValue={interval} className={clsx('ml-[5px] h-[23px] shrink-0 border border-[#3a3a3a] bg-[#242424] pl-3 text-xs text-[#cfcfcf]', intervalWidth)} />
      {(wide ? wideTools : tools).map(([name, label]) => (
        <IconButton key={name} name={name} label={label} active={wide && name === 'trader'} className="h-full w-7 pr-px" />
      ))}
      {wide && (
        <>
          <label className="ml-2.5 flex shrink-0 items-center text-xs text-[#e8e8e8]">
            <span className="w-[53px]">Account:</span>
            <span className="relative block">
              <select className="h-[25px] w-[97px] appearance-none border border-[#3a3a3a] bg-[#242424] pl-1.5 text-[11px] text-[#e8e8e8]">
                <option>Sim Default</option>
              </select>
              <span className="pointer-events-none absolute inset-y-0 right-0 flex w-5 items-center justify-center border-l border-[#3a3a3a]">
                <Glyph name="down" />
              </span>
            </span>
          </label>
          <button type="button" className="ml-[7px] h-[22px] w-[62px] shrink-0 border border-white bg-[#a6a6a6] text-xs font-bold text-black">
            Sweeper
          </button>
        </>
      )}
      <div className="ml-auto flex h-full shrink-0 items-center">
        {more && <IconButton name="more" label="More tools" className="h-full w-3.5 bg-[#25252b]" />}
        <button type="button" aria-label="Help" className="w-[26px] text-sm font-bold">
          ?
        </button>
      </div>
    </div>
  );
}

function BottomBar({ thumb }: { thumb: string }) {
  return (
    <div className="flex h-[18px] shrink-0 items-stretch bg-[#1b1b1b] text-[#b8b8b8]">
      <IconButton name="zoomOut" label="Zoom out" className="w-[25px] pr-0.5" />
      <IconButton name="zoomIn" label="Zoom in" className="w-[25px] pr-0.5" />
      <IconButton name="back" label="Jump back" className="w-[25px]" />
      <IconButton name="left" label="Scroll left" className="w-3.5 overflow-hidden bg-[#333]" />
      <div className="flex flex-1 items-center justify-end border-y border-[#333] bg-black pr-px">
        <div className={clsx('h-3 bg-[#383838]', thumb)} />
      </div>
      <IconButton name="right" label="Scroll right" className="w-3.5 overflow-hidden bg-[#333]" />
      <IconButton name="forward" label="Jump to latest" className="w-[25px] pr-0.5" />
    </div>
  );
}

type FrameProps = {
  tabs: string[];
  active: number;
  className?: string;
  header: string;
  tabRow?: string;
  panel: string;
  children: ReactNode;
};

function Frame({ tabs, active, className, header, tabRow, panel, children }: FrameProps) {
  return (
    <section className={clsx('border-[#3c3c3c] bg-black', className)}>
      <header className={clsx('flex items-end justify-between', header)}>
        <h2 className="pb-1.5 text-[13px] leading-5 text-[#e8e8e8]">Untitled</h2>
        <div className="flex pb-2 text-[#c0c0c0]">
          <IconButton name="menu" label="Menu" className="w-[25px]" />
          <IconButton name="pin" label="Pin" className="w-[25px]" />
          <IconButton name="minimize" label="Minimize" className="w-[25px]" />
          <IconButton name="maximize" label="Maximize" className="w-[25px]" />
          <IconButton name="close" label="Close window" className="w-[23px]" />
        </div>
      </header>
      <nav className={clsx('flex h-[22px] gap-0.5', tabRow)}>
        {tabs.map((tab, i) => (
          <button key={tab} type="button" className={clsx('px-2.5 text-[11px]', i === active ? 'bg-[#1650f0] text-[#d8dcf0]' : 'bg-[#333] text-[#c4c4c4]')}>
            {tab}
          </button>
        ))}
        <IconButton name="close" label="Close tab" className="ml-auto w-5 text-white" />
      </nav>
      <div className="border-t-2 border-[#1a48d0]">
        <div className={clsx('border border-[#3c3c3c] pt-0.5 pr-1 pb-1', panel)}>{children}</div>
      </div>
    </section>
  );
}

function CollapseButton({ className }: { className: string }) {
  return <IconButton name="back" label="Collapse panel" className={clsx('absolute h-6 w-6 rounded bg-[#1c1c1c] text-[#c8c8c8]', className)} />;
}

/* ---------- order panel ---------- */

const orderButtons = ['Buy Market', 'Sell Market', 'Buy Ask', 'Sell Ask', 'Buy Bid', 'Sell Bid'];
const closeButtons = ['Close', 'Cancel All', 'Reverse', 'Break Even'];

type OrderPanelProps = { id: string; size: number; strategy: string; managed: boolean; height: string; thumb: string };

function OrderPanel({ id, size, strategy, managed, height, thumb }: OrderPanelProps) {
  return (
    <aside className={clsx('flex w-[265px] shrink-0 overflow-hidden border-l border-[#333]', height)}>
      <div className="min-w-0 flex-1">
        <div className="flex h-[26px] items-center justify-end pr-2">
          <button type="button" aria-label="Panel help" className="text-sm font-bold text-[#c0c0c0]">
            ?
          </button>
        </div>
        <div className="flex h-5 justify-center gap-[9px] pr-2.5 text-xs">
          <button type="button" className="w-[55px] border-b-2 border-[#1650f0] text-white">
            Basic
          </button>
          <button type="button" className="border-b-2 border-transparent text-[#6c6c6c]">
            Advanced
          </button>
        </div>
        <div className="mt-[7px] grid grid-cols-2 gap-x-3 gap-y-2.5 px-[5px]">
          {orderButtons.map((label) => (
            <button
              key={label}
              type="button"
              className={clsx('h-[30px] rounded border text-[13px]', label.startsWith('Buy') ? 'border-[#1650f0] text-[#1650f0]' : 'border-[#ff4545] text-[#ff4545]')}
            >
              {label}
            </button>
          ))}
        </div>
        <div className="mt-2 flex h-[25px] items-center justify-center pl-1 text-[#c0c0c0]">
          <label htmlFor={`${id}-size`} className="text-[11px] text-[#e0e0e0]">
            Size
          </label>
          <div className="ml-1.5 flex h-full w-[100px] border border-[#3a3a3a] bg-[#242424]">
            <input id={`${id}-size`} type="text" inputMode="numeric" defaultValue={size} className="w-[76px] bg-transparent pl-1.5 text-xs text-[#e8e8e8]" />
            <div className="flex flex-1 flex-col bg-[#1b1b1b]">
              <IconButton name="up" label="Increase size" className="h-1/2 overflow-hidden" />
              <IconButton name="down" label="Decrease size" className="h-1/2 overflow-hidden" />
            </div>
          </div>
          <IconButton name="gear" label="Size settings" className="ml-0.5" />
        </div>
        <div className="mt-[5px] px-0.5 text-xs">
          <div className="flex h-[26px] items-center justify-center border border-[#3a3a3a] text-[#e0e0e0]">Daily PnL</div>
          <div className="mt-1 grid h-[26px] grid-cols-3 gap-1 text-[#0aa06e]">
            <div className="flex items-center justify-center border border-[#3a3a3a]">0.04%</div>
            <div className="flex items-center justify-center border-2 border-[#e8e8e8]">$188.00</div>
            <div className="flex items-center justify-center border border-[#3a3a3a]">36</div>
          </div>
        </div>
        <div className="mt-[7px] grid grid-cols-2 gap-x-3 gap-y-2.5 px-1.5">
          {closeButtons.map((label) => (
            <button key={label} type="button" disabled className="h-[30px] rounded border border-[#383838] text-[13px] text-[#666]">
              {label}
            </button>
          ))}
        </div>
        <label className="mt-[7px] flex h-4 items-center gap-1.5 px-1.5 text-[11px] text-[#e0e0e0]">
          <input type="checkbox" defaultChecked={managed} className="peer sr-only" />
          <span className="flex h-4 w-4 items-center justify-center border border-[#444] bg-[#1b1b1b] text-transparent peer-checked:text-white">
            <svg viewBox="0 0 12 12" className="h-3 w-3" fill="none" stroke="currentColor" strokeWidth="2" aria-hidden="true">
              <path d="M1.5 6.5l3 3.500L10.500 2" />
            </svg>
          </span>
          Trade Management Strategy
        </label>
        <div className={clsx('mt-1 flex items-center px-1.5', managed ? 'text-[#c8c8c8]' : 'text-[#6a6a6a]')}>
          <div className="relative">
            <select
              aria-label="Strategy"
              disabled={!managed}
              className={clsx(
                'h-[25px] w-[214px] appearance-none overflow-hidden border border-[#3a3a3a] pr-6 pl-1.5 text-[11px] disabled:opacity-100',
                managed ? 'bg-[#242424] text-[#e8e8e8]' : 'bg-black text-[#7a7a7a]',
              )}
            >
              <option>{strategy}</option>
            </select>
            <span className="pointer-events-none absolute inset-y-0 right-0 flex w-5 items-center justify-center border-l border-[#3a3a3a]">
              <Glyph name="down" />
            </span>
          </div>
          <IconButton name="edit" label="Edit strategy" className="ml-2" />
        </div>
        <div className="px-2 text-[11px] text-[#e0e0e0]">Account:</div>
      </div>
      <div className="flex w-4 shrink-0 flex-col items-center bg-[#0a0a0a] text-[#e0e0e0]">
        <IconButton name="up" label="Scroll up" className="h-[17px] w-4 bg-[#2c2c2c]" />
        <div className={clsx('mt-0.5 w-[11px] bg-[#383838]', thumb)} />
        <IconButton name="down" label="Scroll down" className="mt-auto h-[17px] w-4 bg-[#2c2c2c]" />
      </div>
    </aside>
  );
}

export default function App() {
  return (
    <main className="flex min-h-screen overflow-hidden bg-black font-['Noto_Sans',sans-serif]">
      <div className="w-[649px] shrink-0">
        <Frame tabs={['MNQ Minute 30']} active={0} className="border-r border-b" header="h-[27px] pl-0.5" panel="border-l-0 pl-[3px]">
          <Toolbar interval="Minute 30" intervalWidth="w-[102px]" linked more />
          <Minute30Chart />
          <BottomBar thumb="w-[106px]" />
        </Frame>
        <Frame tabs={['MNQ Minute 5']} active={0} className="mt-[5px] border-t border-r pb-0.5" header="h-[31px] pl-0.5" panel="border-l-0 pl-0.5">
          <Toolbar interval="Minute 5" intervalWidth="w-[102px]" linked more />
          <Minute5Chart />
          <BottomBar thumb="w-5" />
        </Frame>
        <Frame tabs={['MNQ Minute 1']} active={0} className="border-y border-r pb-0.5" header="h-[31px] pl-1" tabRow="pl-px" panel="pl-1">
          <Toolbar interval="Minute 1" intervalWidth="w-[102px]" linked more />
          <div className="relative">
            <Minute1Chart />
            <CollapseButton className="top-[11px] right-[87px]" />
          </div>
          <BottomBar thumb="w-4" />
        </Frame>
      </div>

      <div className="min-w-0 flex-1">
        <Frame
          tabs={['MNQ Second 15', 'MGC RenkoBxt [10/20/8]', 'MNQ RenkoBxt [40/80/34]', 'MNQ RenkoBxt [20/40/16]']}
          active={2}
          className="mr-px ml-[3px] border-x border-b px-0.5 pb-0.5"
          header="h-6 pl-1"
          tabRow="pl-px"
          panel="pl-1"
        >
          <Toolbar interval="RenkoBxt [40/80/34]" intervalWidth="w-[143px]" wide more />
          <div className="flex">
            <div className="relative min-w-0 flex-1">
              <Renko40Chart />
              <CollapseButton className="top-[11px] right-[86px]" />
              <BottomBar thumb="w-[94px]" />
            </div>
            <OrderPanel id="sweeper-40" size={1} strategy="[KnG Sweeper NQ 40T1 120T2 82S" managed={false} height="h-[379px]" thumb="h-[233px]" />
          </div>
        </Frame>

        <Frame
          tabs={['MGC RenkoBxt [3/6/2]', 'MNQ RenkoBxt [7/14/6]']}
          active={1}
          className="mt-px mr-0.5 border px-0.5 pb-0.5"
          header="h-8 pl-1"
          tabRow="pl-px"
          panel="pl-1"
        >
          <Toolbar interval="RenkoBxt [7/14/6]" intervalWidth="w-[129px]" wide />
          <div className="flex">
            <div className="relative min-w-0 flex-1">
              <Renko7Chart />
              <CollapseButton className="top-[11px] right-[86px]" />
              <button type="button" className="absolute top-2.5 right-[29px] h-5 w-[30px] rounded-sm bg-[#1650f0] text-[11px] text-white">
                F
              </button>
              <BottomBar thumb="w-[23px]" />
            </div>
            <OrderPanel id="sweeper-7" size={5} strategy="[KnG Sweeper Mini bars MNQ 20T" managed height="h-[395px]" thumb="h-[254px]" />
          </div>
        </Frame>

        {/* edge of the workspace behind */}
        <div className="flex h-[21px] overflow-hidden">
          <div className="w-[84px] border-r border-[#333]" />
          <div className="ml-2 flex-1">
            <div className="flex h-[18px] border-b border-l border-[#333]">
              <div className="ml-0.5 h-[15px] w-[125px] border-x border-b border-[#333]" />
              <div className="ml-1.5 h-[15px] flex-1 border-b border-l border-[#333] pr-1 pl-1">
                <div className="flex h-2.5 flex-col justify-end overflow-hidden">
                  <BottomBar thumb="w-[213px]" />
                </div>
              </div>
            </div>
            <div className="h-[3px] w-[173px] bg-[#1650f0]" />
          </div>
        </div>
      </div>
    </main>
  );
}
